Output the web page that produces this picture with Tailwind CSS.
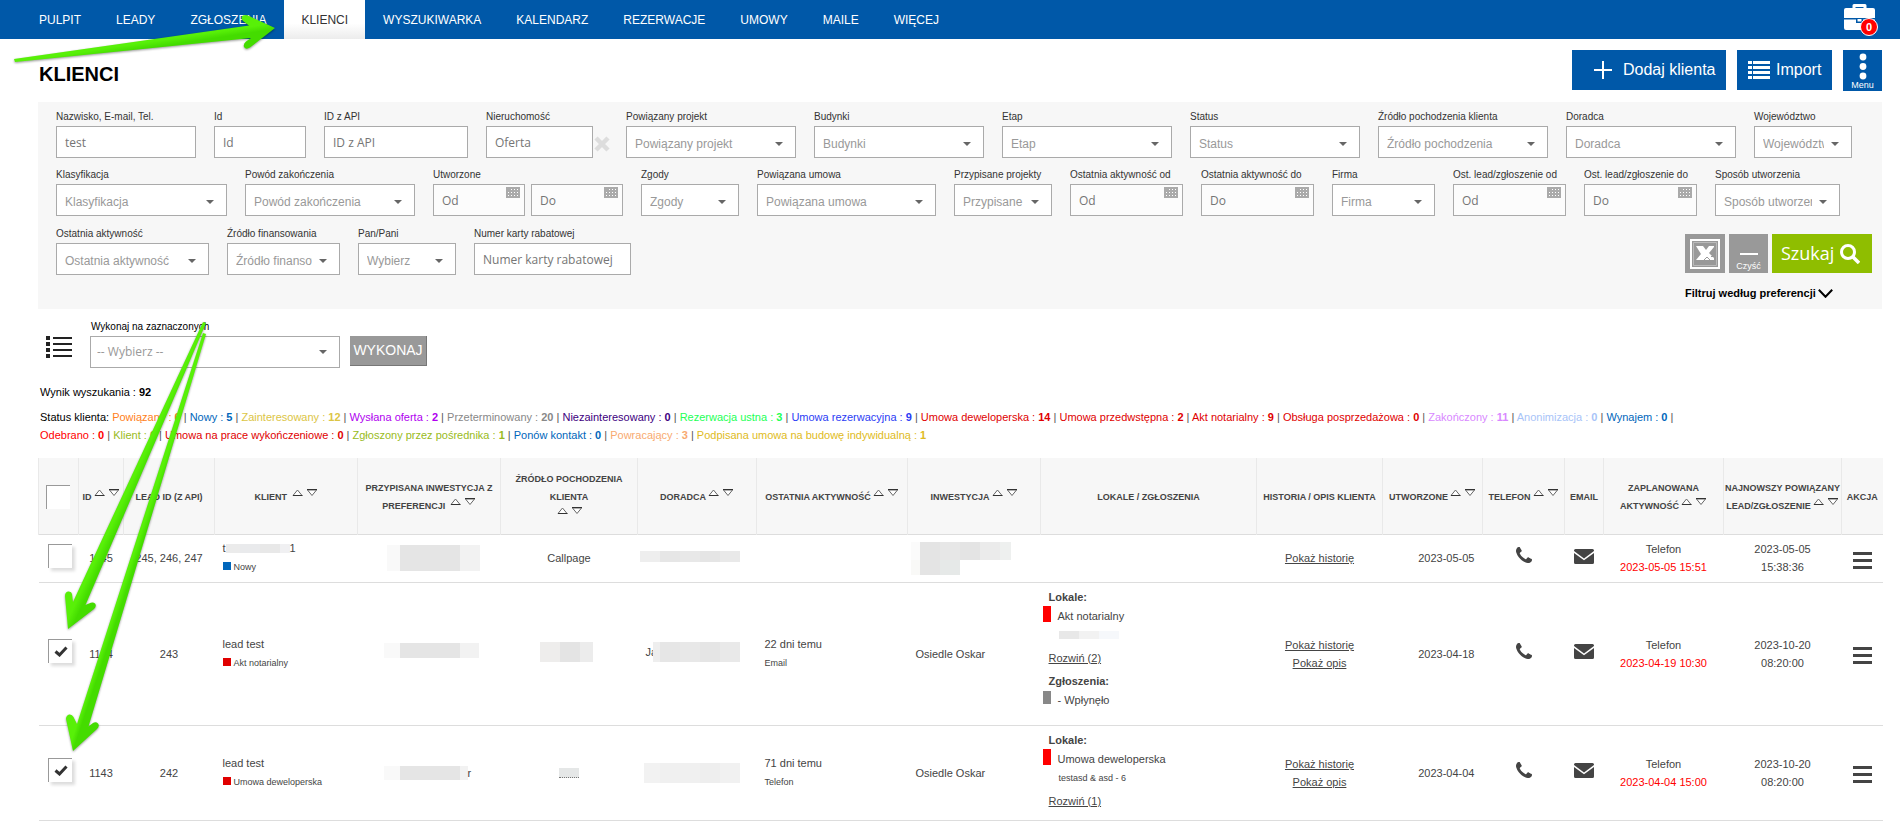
<!DOCTYPE html>
<html lang="pl">

    <head>
        <title>Klienci</title>
        <meta charset="utf-8">
        <meta name="viewport" content="width=device-width, initial-scale=1">
        <script src="https://cdn.jsdelivr.net/npm/@tailwindcss/browser@4"></script>
    </head>

    <body class="relative bg-white text-black font-['Liberation_Sans',Arial,sans-serif]">

        <!-- Shared icons -->
        <svg class="hidden">
            <symbol id="caret" viewBox="0 0 8 4">
                <path d="M0 0h8L4 4z" fill="#666" />
            </symbol>
            <symbol id="calendar" viewBox="0 0 14 11">
                <path d="M0 0h14v11H0z" fill="#aaa" />
                <path d="M5 2h1v1H5zM8 2h1v1H8zM11 2h1v1h-1zM2 5h1v1H2zM5 5h1v1H5zM8 5h1v1H8zM11 5h1v1h-1zM2 8h1v1H2zM5 8h1v1H5zM8 8h1v1H8zM11 8h1v1h-1z"
                    fill="#fff" />
            </symbol>
            <symbol id="sort" viewBox="0 0 26 11">
                <path d="M1 6.500h9L5.500 1z" fill="#fff" stroke="#666" />
                <path d="M1 6.500h9.500" stroke="#333" />
                <path d="M15.500 1h9L20 6.500z" fill="#fff" stroke="#666" />
                <path d="M15 .500h10" stroke="#333" />
            </symbol>
            <symbol id="phone" viewBox="0 0 1408 1408">
                <path d="M1408 1112q0 27-10 70.500t-21 68.500q-21 50-122 106-94 51-186 51-27 0-53-3.500t-57.500-12.500-47-14.500-55.500-20.500-49-18q-98-35-175-83-127-79-264-216t-216-264q-48-77-83-175-3-9-18-49t-20.500-55.500-14.500-47T3.500 392 0 339q0-92 51-186Q107 52 157 31q25-11 68.500-21T296 0q14 0 21 3 18 6 53 76 11 19 30 54t35 63.500 31 53.500q3 4 17.500 25t21.500 35.500 7 28.500q0 20-28.500 50t-62 55-62 53-28.500 46q0 9 5 22.500t8.500 20.500 14 24 11.500 19q76 137 174 235t235 174q2 1 19 11.500t24 14 20.500 8.500 22.500 5q18 0 46-28.500t53-62 55-62 50-28.500q14 0 28.500 7t35.500 21.500 25 17.500q25 15 53.500 31t63.500 35 54 30q70 35 76 53 3 7 3 21z"
                    fill="#444" />
            </symbol>
            <symbol id="mail" viewBox="0 0 20 15">
                <path d="M1.500 0h17Q20 0 20 1.500v.6l-10 7.400L0 2.100v-.6Q0 0 1.500 0z" fill="#444" />
                <path d="M0 4l10 7.200L20 4v9.500q0 1.500-1.500 1.500h-17Q0 15 0 13.500z" fill="#444" />
            </symbol>
            <symbol id="bars" viewBox="0 0 19 17">
                <path d="M0 0h19v3H0zM0 7h19v3H0zM0 14h19v3H0z" fill="#444" />
            </symbol>
            <symbol id="check" viewBox="0 0 14 11">
                <path d="M1.500 5.500L5.500 9 12.500 1.500" fill="none" stroke="#333" stroke-width="3" />
            </symbol>
        </svg>

        <!-- Navigation Bar -->
        <header class="flex h-[39px] items-stretch justify-between bg-[#0058a8] pl-[22px] pr-5">
            <nav
                class="flex items-stretch gap-px text-[12px] text-white [&_a]:flex [&_a]:items-center [&_a]:px-[17px]">
                <a href="#">PULPIT</a>
                <a href="#">LEADY</a>
                <a href="#">ZGŁOSZENIA</a>
                <a href="#" class="bg-linear-to-b from-white from-60% to-[#ececec] text-[#333]">KLIENCI</a>
                <a href="#">WYSZUKIWARKA</a>
                <a href="#">KALENDARZ</a>
                <a href="#">REZERWACJE</a>
                <a href="#">UMOWY</a>
                <a href="#">MAILE</a>
                <a href="#">WIĘCEJ</a>
            </nav>
            <a href="#" class="relative block w-9 pt-1" aria-label="Teczka">
                <svg class="h-7 w-[31px]" viewBox="0 0 31 28">
                    <path d="M10 5V1.500h11V5" fill="none" stroke="#fff" stroke-width="3" stroke-linejoin="round" />
                    <path d="M2 4h27q2 0 2 2v8H0V6q0-2 2-2z" fill="#fff" />
                    <path d="M0 15.500h12V19h7v-3.500h12V24q0 2-2 2H2q-2 0-2-2z" fill="#fff" />
                    <path d="M13.500 15h4v2.500h-4z" fill="#fff" />
                </svg>
                <span
                    class="absolute right-0.5 top-[18px] flex size-[18px] items-center justify-center rounded-full border border-white bg-[#f00] text-[11px] font-bold text-white">0</span>
            </a>
        </header>

        <main class="pl-[38px] pr-[18px]">

            <!-- Title and actions -->
            <div class="flex items-start justify-between pb-[11px] pt-[11px]">
                <h1 class="pt-[9px] pl-px text-[20px] leading-[30px] font-bold">KLIENCI</h1>
                <div class="flex items-start gap-[11px] text-[16px] text-white">
                    <button type="button" class="flex h-10 w-[154px] items-center gap-[11px] bg-[#0058a8] pl-[22px]">
                        <svg class="size-[18px]" viewBox="0 0 18 18">
                            <path d="M9 0v18M0 9h18" stroke="#fff" stroke-width="2" />
                        </svg>
                        Dodaj klienta
                    </button>
                    <button type="button" class="flex h-10 w-[95px] items-center gap-1.5 bg-[#0058a8] pl-[11px]">
                        <svg class="h-[18px] w-[22px]" viewBox="0 0 22 18">
                            <path d="M0 0h4v3H0zM5 0h17v3H5zM0 5h4v3H0zM5 5h17v3H5zM0 10h4v3H0zM5 10h17v3H5zM0 15h4v3H0zM5 15h17v3H5z"
                                fill="#fff" />
                        </svg>
                        Import
                    </button>
                    <button type="button"
                        class="flex h-[41px] w-[39px] flex-col items-center bg-[#0058a8] pt-[3px] text-[9px] leading-[11px]">
                        <svg class="h-[27px] w-2" viewBox="0 0 8 27">
                            <circle cx="4" cy="4" r="3.400" fill="#fff" />
                            <circle cx="4" cy="13.500" r="3.400" fill="#fff" />
                            <circle cx="4" cy="23" r="3.400" fill="#fff" />
                        </svg>
                        Menu
                    </button>
                </div>
            </div>

            <!-- Search filters -->
            <form class="flex flex-col gap-2.5 bg-[#f7f7f7] pb-2 pl-[18px] pt-2 pr-2.5
                [&_label]:mb-0.5 [&_label]:block [&_label]:whitespace-nowrap [&_label]:text-[10px] [&_label]:leading-[14px] [&_label]:text-[#333]
                [&_input]:block [&_input]:h-8 [&_input]:w-full [&_input]:border [&_input]:border-[#aaa] [&_input]:px-2 [&_input]:text-[12px] [&_input]:text-[#757575] [&_input]:placeholder:text-[#757575] [&_input]:font-['Open_Sans',sans-serif]
                [&_select]:block [&_select]:h-8 [&_select]:w-full [&_select]:appearance-none [&_select]:border [&_select]:border-[#aaa] [&_select]:bg-white [&_select]:pl-2 [&_select]:pr-[27px] [&_select]:pt-1 [&_select]:text-[12px] [&_select]:text-[#999]
                [&_.caret]:pointer-events-none [&_.caret]:absolute [&_.caret]:right-[13px] [&_.caret]:bottom-3 [&_.caret]:h-1 [&_.caret]:w-2
                [&_.cal]:pointer-events-none [&_.cal]:absolute [&_.cal]:right-[5px] [&_.cal]:bottom-[18px] [&_.cal]:h-[11px] [&_.cal]:w-3.5">

                <!-- Row 1 -->
                <div class="flex flex-wrap gap-x-[18px] gap-y-2.5">
                    <div class="w-[140px]">
                        <label for="name">Nazwisko, E-mail, Tel.</label>
                        <input type="text" id="name" value="test" class="bg-white">
                    </div>
                    <div class="w-[92px]">
                        <label for="clientId">Id</label>
                        <input type="text" id="clientId" placeholder="Id" class="bg-white">
                    </div>
                    <div class="w-36">
                        <label for="apiId">ID z API</label>
                        <input type="text" id="apiId" placeholder="ID z API" class="bg-white">
                    </div>
                    <div class="w-[122px]">
                        <label for="offer">Nieruchomość</label>
                        <div class="flex gap-px">
                            <div class="w-[107px] shrink-0">
                                <input type="text" id="offer" placeholder="Oferta" class="bg-white">
                            </div>
                            <button type="button" class="shrink-0 pt-[3px]" aria-label="Usuń">
                                <svg class="size-4" viewBox="0 0 16 16">
                                    <path d="M2 2l12 12M14 2L2 14" stroke="#ddd" stroke-width="4.500" />
                                </svg>
                            </button>
                        </div>
                    </div>
                    <div class="relative w-[170px]">
                        <label for="project">Powiązany projekt</label>
                        <select id="project"><option>Powiązany projekt</option></select>
                        <svg class="caret"><use href="#caret" /></svg>
                    </div>
                    <div class="relative w-[170px]">
                        <label for="buildings">Budynki</label>
                        <select id="buildings"><option>Budynki</option></select>
                        <svg class="caret"><use href="#caret" /></svg>
                    </div>
                    <div class="relative w-[170px]">
                        <label for="stage">Etap</label>
                        <select id="stage"><option>Etap</option></select>
                        <svg class="caret"><use href="#caret" /></svg>
                    </div>
                    <div class="relative w-[170px]">
                        <label for="status">Status</label>
                        <select id="status"><option>Status</option></select>
                        <svg class="caret"><use href="#caret" /></svg>
                    </div>
                    <div class="relative w-[170px]">
                        <label for="source">Źródło pochodzenia klienta</label>
                        <select id="source"><option>Źródło pochodzenia</option></select>
                        <svg class="caret"><use href="#caret" /></svg>
                    </div>
                    <div class="relative w-[170px]">
                        <label for="advisor">Doradca</label>
                        <select id="advisor"><option>Doradca</option></select>
                        <svg class="caret"><use href="#caret" /></svg>
                    </div>
                    <div class="relative w-[98px]">
                        <label for="region">Województwo</label>
                        <select id="region"><option>Województwo</option></select>
                        <svg class="caret"><use href="#caret" /></svg>
                    </div>
                </div>

                <!-- Row 2 -->
                <div class="flex flex-wrap gap-x-[18px] gap-y-2.5">
                    <div class="relative w-[171px]">
                        <label for="class">Klasyfikacja</label>
                        <select id="class"><option>Klasyfikacja</option></select>
                        <svg class="caret"><use href="#caret" /></svg>
                    </div>
                    <div class="relative w-[170px]">
                        <label for="reason">Powód zakończenia</label>
                        <select id="reason"><option>Powód zakończenia</option></select>
                        <svg class="caret"><use href="#caret" /></svg>
                    </div>
                    <div class="w-[190px]">
                        <label for="createdFrom">Utworzone</label>
                        <div class="grid grid-cols-2 gap-1.5">
                            <div class="relative">
                                <input type="text" id="createdFrom" placeholder="Od" class="bg-[#fcfcfc]">
                                <svg class="cal"><use href="#calendar" /></svg>
                            </div>
                            <div class="relative">
                                <input type="text" aria-label="Utworzone do" placeholder="Do" class="bg-[#fcfcfc]">
                                <svg class="cal"><use href="#calendar" /></svg>
                            </div>
                        </div>
                    </div>
                    <div class="relative w-[98px]">
                        <label for="consents">Zgody</label>
                        <select id="consents"><option>Zgody</option></select>
                        <svg class="caret"><use href="#caret" /></svg>
                    </div>
                    <div class="relative w-[179px]">
                        <label for="contract">Powiązana umowa</label>
                        <select id="contract"><option>Powiązana umowa</option></select>
                        <svg class="caret"><use href="#caret" /></svg>
                    </div>
                    <div class="relative w-[98px]">
                        <label for="assigned">Przypisane projekty</label>
                        <select id="assigned"><option>Przypisane</option></select>
                        <svg class="caret"><use href="#caret" /></svg>
                    </div>
                    <div class="relative w-[113px]">
                        <label for="activityFrom">Ostatnia aktywność od</label>
                        <input type="text" id="activityFrom" placeholder="Od" class="bg-[#fcfcfc]">
                        <svg class="cal"><use href="#calendar" /></svg>
                    </div>
                    <div class="relative w-[113px]">
                        <label for="activityTo">Ostatnia aktywność do</label>
                        <input type="text" id="activityTo" placeholder="Do" class="bg-[#fcfcfc]">
                        <svg class="cal"><use href="#calendar" /></svg>
                    </div>
                    <div class="relative w-[103px]">
                        <label for="company">Firma</label>
                        <select id="company"><option>Firma</option></select>
                        <svg class="caret"><use href="#caret" /></svg>
                    </div>
                    <div class="relative w-[113px]">
                        <label for="leadFrom">Ost. lead/zgłoszenie od</label>
                        <input type="text" id="leadFrom" placeholder="Od" class="bg-[#fcfcfc]">
                        <svg class="cal"><use href="#calendar" /></svg>
                    </div>
                    <div class="relative w-[113px]">
                        <label for="leadTo">Ost. lead/zgłoszenie do</label>
                        <input type="text" id="leadTo" placeholder="Do" class="bg-[#fcfcfc]">
                        <svg class="cal"><use href="#calendar" /></svg>
                    </div>
                    <div class="relative w-[125px]">
                        <label for="method">Sposób utworzenia</label>
                        <select id="method"><option>Sposób utworzenia</option></select>
                        <svg class="caret"><use href="#caret" /></svg>
                    </div>
                </div>

                <!-- Row 3 -->
                <div class="flex items-start justify-between pt-px">
                    <div class="flex flex-wrap gap-x-[18px] gap-y-2.5">
                        <div class="relative w-[153px]">
                            <label for="lastActivity">Ostatnia aktywność</label>
                            <select id="lastActivity"><option>Ostatnia aktywność</option></select>
                            <svg class="caret"><use href="#caret" /></svg>
                        </div>
                        <div class="relative w-[113px]">
                            <label for="funding">Źródło finansowania</label>
                            <select id="funding"><option>Źródło finansowania</option></select>
                            <svg class="caret"><use href="#caret" /></svg>
                        </div>
                        <div class="relative w-[98px]">
                            <label for="gender">Pan/Pani</label>
                            <select id="gender"><option>Wybierz</option></select>
                            <svg class="caret"><use href="#caret" /></svg>
                        </div>
                        <div class="w-[157px]">
                            <label for="card">Numer karty rabatowej</label>
                            <input type="text" id="card" placeholder="Numer karty rabatowej" class="bg-white">
                        </div>
                    </div>
                    <div class="pt-[7px]">
                        <div class="flex gap-1 text-white">
                            <button type="button" class="flex h-[39px] w-10 items-center justify-center bg-[#999]"
                                aria-label="Excel">
                                <svg class="size-[30px]" viewBox="0 0 30 30">
                                    <path d="M1 1h28v28H1z" fill="none" stroke="#fff" stroke-width="2" />
                                    <path d="M3.500 3.500h23v23h-23z" fill="none" stroke="#bbb" />
                                    <path d="M6 7h7l3 4 3-4h5v1l-5 6 5 5v2H6l5-6z" fill="#fff" />
                                    <path d="M14 21l3-3 3 3M20 14.500h5M21 17.500h4" stroke="#999" fill="none" />
                                </svg>
                            </button>
                            <button type="reset"
                                class="flex h-[39px] w-[39px] flex-col items-center bg-[#999] pt-[19px] text-[9px] leading-[11px]">
                                <span class="mb-1.5 block h-0.5 w-[18px] bg-white"></span>
                                Czyść
                            </button>
                            <button type="submit"
                                class="flex h-[39px] w-[100px] items-center gap-1.5 bg-[#8fbe00] pl-[9px] font-['Open_Sans',sans-serif] text-[18px]">
                                Szukaj
                                <svg class="size-5" viewBox="0 0 20 20">
                                    <circle cx="8" cy="8" r="6.500" fill="none" stroke="#fff" stroke-width="3" />
                                    <path d="M13 13l6 6" stroke="#fff" stroke-width="3.500" />
                                </svg>
                            </button>
                        </div>
                        <button type="button"
                            class="mt-3 flex items-center gap-0.5 text-[11px] leading-4 font-bold">
                            Filtruj według preferencji
                            <svg class="h-[9px] w-[15px]" viewBox="0 0 15 9">
                                <path d="M.800.800l6.700 7 6.700-7" fill="none" stroke="#000" stroke-width="2" />
                            </svg>
                        </button>
                    </div>
                </div>
            </form>

            <!-- Bulk actions -->
            <div class="mt-[11px] flex items-start pl-2">
                <button type="button" class="mt-4 mr-[18px] h-[22px] w-[26px]" aria-label="Lista">
                    <svg class="h-[22px] w-[26px]" viewBox="0 0 26 22">
                        <path d="M0 0h4v4H0zM7 1h19v2H7zM0 6h4v4H0zM7 7h19v2H7zM0 12h4v4H0zM7 13h19v2H7zM0 18h4v4H0zM7 19h19v2H7z"
                            fill="#222" />
                    </svg>
                </button>
                <div class="relative mr-2.5 w-[250px]">
                    <label for="bulk" class="mb-0.5 block pl-px text-[10px] leading-[14px]">Wykonaj na
                        zaznaczonych</label>
                    <select id="bulk"
                        class="block h-8 w-full appearance-none border border-[#aaa] bg-white pl-1.5 text-[12px] text-[#999] font-['Open_Sans',sans-serif]">
                        <option>-- Wybierz --</option>
                    </select>
                    <svg class="pointer-events-none absolute right-[13px] bottom-3.5 h-1 w-2">
                        <use href="#caret" />
                    </svg>
                </div>
                <button type="button"
                    class="mt-4 h-[30px] w-[77px] border-r border-b border-[#777] bg-[#999] text-[14px] text-white">WYKONAJ</button>
            </div>

            <!-- Results summary -->
            <p class="mt-[15px] pl-0.5 text-[11px] leading-[18px]">Wynik wyszukania : <b>92</b></p>
            <p class="mt-[7px] pl-0.5 pr-40 text-[11px] leading-[18px] text-[#555] [&_a]:whitespace-nowrap">
                <span class="text-black">Status klienta:</span>
                <a href="#" class="text-[#ff8020]">Powiązany : <b>0</b></a> |
                <a href="#" class="text-[#0066bb]">Nowy : <b>5</b></a> |
                <a href="#" class="text-[#dcc544]">Zainteresowany : <b>12</b></a> |
                <a href="#" class="text-[#b000f0]">Wysłana oferta : <b>2</b></a> |
                <a href="#" class="text-[#888]">Przeterminowany : <b>20</b></a> |
                <a href="#" class="text-[#400080]">Niezainteresowany : <b>0</b></a> |
                <a href="#" class="text-[#22ff55]">Rezerwacja ustna : <b>3</b></a> |
                <a href="#" class="text-[#2b3cf5]">Umowa rezerwacyjna : <b>9</b></a> |
                <a href="#" class="text-[#e00000]">Umowa deweloperska : <b>14</b></a> |
                <a href="#" class="text-[#e00000]">Umowa przedwstępna : <b>2</b></a> |
                <a href="#" class="text-[#e00000]">Akt notarialny : <b>9</b></a> |
                <a href="#" class="text-[#e00000]">Obsługa posprzedażowa : <b>0</b></a> |
                <a href="#" class="text-[#d988ff]">Zakończony : <b>11</b></a> |
                <a href="#" class="text-[#a8c4f8]">Anonimizacja : <b>0</b></a> |
                <a href="#" class="text-[#0066bb]">Wynajem : <b>0</b></a> |
                <a href="#" class="text-[#ff0000]">Odebrano : <b>0</b></a> |
                <a href="#" class="text-[#99bb22]">Klient : <b>0</b></a> |
                <a href="#" class="text-[#e00000]">Umowa na prace wykończeniowe : <b>0</b></a> |
                <a href="#" class="text-[#99bb22]">Zgłoszony przez pośrednika : <b>1</b></a> |
                <a href="#" class="text-[#0066bb]">Ponów kontakt : <b>0</b></a> |
                <a href="#" class="text-[#f8aa70]">Powracający : <b>3</b></a> |
                <a href="#" class="text-[#e0bb22]">Podpisana umowa na budowę indywidualną : <b>1</b></a>
            </p>

            <!-- Clients table -->
            <table class="mt-3.5 w-full table-fixed border-collapse text-center text-[11px] leading-[18px] text-[#444]
                [&_th]:border-l [&_th]:border-[#e9e9e9] [&_th]:px-0 [&_th]:pt-[3px] [&_th]:pb-0 [&_td]:p-0
                [&_tr]:border-b [&_tr]:border-[#ddd]
                [&_.sort]:ml-0.5 [&_.sort]:inline-block [&_.sort]:h-[11px] [&_.sort]:w-[26px] [&_.sort]:align-baseline
                [&_.sub]:text-[9px] [&_.sq]:mr-[3px] [&_.sq]:inline-block [&_.sq]:size-2">
                <colgroup>
                    <col class="w-10">
                    <col class="w-[45px]">
                    <col class="w-[91px]">
                    <col class="w-[143px]">
                    <col class="w-[143px]">
                    <col class="w-[137px]">
                    <col class="w-[119px]">
                    <col class="w-[151px]">
                    <col class="w-[133px]">
                    <col class="w-[216px]">
                    <col class="w-[126px]">
                    <col class="w-[100px]">
                    <col class="w-[82px]">
                    <col class="w-[39px]">
                    <col class="w-[120px]">
                    <col class="w-[118px]">
                    <col class="w-[41px]">
                </colgroup>
                <thead class="bg-[#f7f7f7] text-[9px]">
                    <tr class="h-[76px]">
                        <th><input type="checkbox" aria-label="Zaznacz wszystko"
                                class="ml-[7px] block size-6 appearance-none border-t border-l border-[#999] bg-white"></th>
                        <th class="whitespace-nowrap">ID<svg class="sort"><use href="#sort" /></svg></th>
                        <th>LEAD ID (Z API)</th>
                        <th>KLIENT <svg class="sort"><use href="#sort" /></svg></th>
                        <th>PRZYPISANA INWESTYCJA Z<br>PREFERENCJI <svg class="sort"><use href="#sort" /></svg></th>
                        <th>ŹRÓDŁO POCHODZENIA<br>KLIENTA<br><svg class="sort"><use href="#sort" /></svg></th>
                        <th>DORADCA<svg class="sort"><use href="#sort" /></svg></th>
                        <th>OSTATNIA AKTYWNOŚĆ<svg class="sort"><use href="#sort" /></svg></th>
                        <th>INWESTYCJA<svg class="sort"><use href="#sort" /></svg></th>
                        <th>LOKALE / ZGŁOSZENIA</th>
                        <th>HISTORIA / OPIS KLIENTA</th>
                        <th>UTWORZONE<svg class="sort"><use href="#sort" /></svg></th>
                        <th class="whitespace-nowrap">TELEFON<svg class="sort"><use href="#sort" /></svg></th>
                        <th>EMAIL</th>
                        <th>ZAPLANOWANA<br>AKTYWNOŚĆ<svg class="sort"><use href="#sort" /></svg></th>
                        <th class="whitespace-nowrap">NAJNOWSZY POWIĄZANY<br>LEAD/ZGŁOSZENIE<svg class="sort"><use href="#sort" /></svg></th>
                        <th>AKCJA</th>
                    </tr>
                </thead>
                <tbody>
                    <tr class="h-12">
                        <td>
                            <div class="relative mb-1 ml-[9px] size-6">
                                <input type="checkbox" aria-label="Zaznacz 1145"
                                    class="block size-6 appearance-none border-t border-l border-[#999] bg-white shadow-[3px_3px_3px_#ddd]">
                            </div>
                        </td>
                        <td>1145</td>
                        <td>245, 246, 247</td>
                        <td class="text-left">
                            <div class="flex items-center pl-2 leading-[19px]">
                                t<span class="flex h-[9px]"><i class="w-3.5 bg-[#ebebeb]"></i><i
                                        class="w-5 bg-[#e9eaec]"></i><i class="w-5 bg-[#e8e8e8]"></i><i
                                        class="w-2.5 bg-[#f0f0f2]"></i></span>1
                            </div>
                            <div class="sub pl-2 leading-[19px]"><i class="sq bg-[#0066bb]"></i>Nowy</div>
                        </td>
                        <td>
                            <div class="ml-[29px] flex h-[26px] w-[93px]"><i class="w-[13px] bg-[#f9f9f9]"></i><i
                                    class="w-[60px] bg-[#e5e5e5]"></i><i class="w-5 bg-[#f2f2f2]"></i></div>
                        </td>
                        <td>Callpage</td>
                        <td>
                            <div class="mb-1 ml-0.5 flex h-[11px]"><i class="w-5 bg-[#eee]"></i><i
                                    class="w-5 bg-[#e6e6e6]"></i><i class="w-5 bg-[#e8e8e8]"></i><i
                                    class="w-5 bg-[#e5e5e5]"></i><i class="w-5 bg-[#e9e9e9]"></i></div>
                        </td>
                        <td></td>
                        <td>
                            <div class="ml-[3px] flex h-[18px]"><i class="w-[9px] bg-[#fbfbfb]"></i><i
                                    class="w-5 bg-[#e4e4e4]"></i><i class="w-5 bg-[#e7e7e7]"></i><i
                                    class="w-5 bg-[#e4e4e4]"></i><i class="w-5 bg-[#ebebeb]"></i><i
                                    class="w-[11px] bg-[#eef0ef]"></i></div>
                            <div class="ml-[3px] flex h-[15px]"><i class="w-[9px] bg-[#f9f9f7]"></i><i
                                    class="w-5 bg-[#e4e4e4]"></i><i class="w-5 bg-[#e6e9e8]"></i></div>
                        </td>
                        <td></td>
                        <td><a href="#" class="underline">Pokaż historię</a></td>
                        <td class="text-right"><span class="pr-2">2023-05-05</span></td>
                        <td><a href="#" aria-label="Zadzwoń"><svg class="mx-auto mb-1.5 size-4"><use href="#phone" /></svg></a></td>
                        <td><a href="#" aria-label="Wyślij email"><svg class="mx-auto mb-1 h-[15px] w-5"><use href="#mail" /></svg></a></td>
                        <td>Telefon<br><span class="text-[#f00]">2023-05-05 15:51</span></td>
                        <td>2023-05-05<br>15:38:36</td>
                        <td><button type="button" class="block mx-auto pt-1" aria-label="Akcje"><svg class="h-[17px] w-[19px]"><use href="#bars" /></svg></button></td>
                    </tr>
                    <tr class="h-[143px]">
                        <td>
                            <div class="relative mb-1.5 ml-[9px] size-6">
                                <input type="checkbox" checked aria-label="Zaznacz 1144"
                                    class="peer block size-6 appearance-none border-t border-l border-[#999] bg-white shadow-[3px_3px_3px_#ddd]">
                                <svg class="absolute top-[7px] left-1.5 hidden h-[11px] w-3.5 peer-checked:block">
                                    <use href="#check" />
                                </svg>
                            </div>
                        </td>
                        <td>1144</td>
                        <td>243</td>
                        <td class="text-left">
                            <div class="pl-2 leading-[19px]">lead test</div>
                            <div class="sub pl-2 leading-[19px]"><i class="sq bg-[#e00000]"></i>Akt notarialny</div>
                        </td>
                        <td>
                            <div class="mb-1.5 ml-[26px] flex h-[15px]"><i class="w-4 bg-[#f9f9f9]"></i><i
                                    class="w-[60px] bg-[#e5e5e5]"></i><i class="w-[19px] bg-[#f2f2f2]"></i></div>
                        </td>
                        <td>
                            <div class="mb-1 ml-[39px] flex h-5"><i class="w-5 bg-[#eeedec]"></i><i
                                    class="w-5 bg-[#e4e4e4]"></i><i class="w-[13px] bg-[#ececec]"></i></div>
                        </td>
                        <td>
                            <div class="mb-1 ml-2 flex h-5 items-center">Ja<i
                                    class="relative -ml-1 h-5 w-[7px] bg-[#eee]"></i><i class="h-5 w-5 bg-[#e6e6e6]"></i><i
                                    class="h-5 w-5 bg-[#e8e8e8]"></i><i class="h-5 w-5 bg-[#e5e5e5]"></i><i
                                    class="h-5 w-5 bg-[#e9e9e9]"></i></div>
                        </td>
                        <td class="text-left">
                            <div class="pl-2 leading-[19px]">22 dni temu</div>
                            <div class="sub pl-2 leading-[19px]">Email</div>
                        </td>
                        <td class="text-left"><span class="pl-2">Osiedle Oskar</span></td>
                        <td class="text-left align-top">
                            <div class="pt-[5px] pl-2"><b>Lokale:</b></div>
                            <div class="flex pl-0.5 leading-5"><i class="mr-[7px] h-4 w-2 bg-[#f00]"></i>Akt notarialny</div>
                            <div class="flex h-[18px] items-center pl-[18px]"><i class="h-2 w-5 bg-[#e8e8e8]"></i><i
                                    class="h-2 w-5 bg-[#f2f2f2]"></i><i class="h-2 w-5 bg-[#f6f8fb]"></i></div>
                            <div class="mt-[5px] pl-2"><a href="#" class="underline">Rozwiń (2)</a></div>
                            <div class="mt-[5px] pl-2"><b>Zgłoszenia:</b></div>
                            <div class="flex pl-0.5 leading-5"><i class="mr-[7px] mt-px h-[13px] w-2 bg-[#888]"></i>- Wpłynęło</div>
                        </td>
                        <td><a href="#" class="underline">Pokaż historię</a><br><a href="#" class="underline">Pokaż opis</a></td>
                        <td class="text-right"><span class="pr-2">2023-04-18</span></td>
                        <td><a href="#" aria-label="Zadzwoń"><svg class="mx-auto mb-1.5 size-4"><use href="#phone" /></svg></a></td>
                        <td><a href="#" aria-label="Wyślij email"><svg class="mx-auto mb-1 h-[15px] w-5"><use href="#mail" /></svg></a></td>
                        <td>Telefon<br><span class="text-[#f00]">2023-04-19 10:30</span></td>
                        <td>2023-10-20<br>08:20:00</td>
                        <td><button type="button" class="block mx-auto pt-1" aria-label="Akcje"><svg class="h-[17px] w-[19px]"><use href="#bars" /></svg></button></td>
                    </tr>
                    <tr class="h-[95px]">
                        <td>
                            <div class="relative mb-1.5 ml-[9px] size-6">
                                <input type="checkbox" checked aria-label="Zaznacz 1143"
                                    class="peer block size-6 appearance-none border-t border-l border-[#999] bg-white shadow-[3px_3px_3px_#ddd]">
                                <svg class="absolute top-[7px] left-1.5 hidden h-[11px] w-3.5 peer-checked:block">
                                    <use href="#check" />
                                </svg>
                            </div>
                        </td>
                        <td>1143</td>
                        <td>242</td>
                        <td class="text-left">
                            <div class="pl-2 leading-[19px]">lead test</div>
                            <div class="sub pl-2 leading-[19px]"><i class="sq bg-[#e00000]"></i>Umowa deweloperska</div>
                        </td>
                        <td>
                            <div class="ml-[26px] flex items-center"><i class="h-3.5 w-4 bg-[#f9f9f9]"></i><i
                                    class="h-3.5 w-[60px] bg-[#e5e5e5]"></i><i class="h-3.5 w-2 bg-[#f2f2f2]"></i>r</div>
                        </td>
                        <td>
                            <div class="ml-[58px] flex h-2.5"><i class="w-5 border-b border-dotted border-[#777] bg-[#e5e7e7]"></i></div>
                        </td>
                        <td>
                            <div class="ml-1.5 flex h-5"><i class="w-4 bg-[#f2f2f2]"></i><i
                                    class="w-10 bg-[#f0f0f0]"></i><i class="w-5 bg-[#eee]"></i><i
                                    class="w-5 bg-[#f1f1f1]"></i></div>
                        </td>
                        <td class="text-left">
                            <div class="pl-2 leading-[19px]">71 dni temu</div>
                            <div class="sub pl-2 leading-[19px]">Telefon</div>
                        </td>
                        <td class="text-left"><span class="pl-2">Osiedle Oskar</span></td>
                        <td class="text-left align-top">
                            <div class="pt-[5px] pl-2"><b>Lokale:</b></div>
                            <div class="flex pl-0.5 leading-5"><i class="mr-[7px] h-4 w-2 bg-[#f00]"></i>Umowa deweloperska</div>
                            <div class="sub pl-[18px]">testasd &amp; asd - 6</div>
                            <div class="mt-[5px] pl-2"><a href="#" class="underline">Rozwiń (1)</a></div>
                        </td>
                        <td><a href="#" class="underline">Pokaż historię</a><br><a href="#" class="underline">Pokaż opis</a></td>
                        <td class="text-right"><span class="pr-2">2023-04-04</span></td>
                        <td><a href="#" aria-label="Zadzwoń"><svg class="mx-auto mb-1.5 size-4"><use href="#phone" /></svg></a></td>
                        <td><a href="#" aria-label="Wyślij email"><svg class="mx-auto mb-1 h-[15px] w-5"><use href="#mail" /></svg></a></td>
                        <td>Telefon<br><span class="text-[#f00]">2023-04-04 15:00</span></td>
                        <td>2023-10-20<br>08:20:00</td>
                        <td><button type="button" class="block mx-auto pt-1" aria-label="Akcje"><svg class="h-[17px] w-[19px]"><use href="#bars" /></svg></button></td>
                    </tr>
                </tbody>
            </table>
        </main>

        <!-- Guide arrows over the page -->
        <svg class="pointer-events-none absolute top-0 left-0 h-[780px] w-[300px] drop-shadow-[0_1px_1px_#0006]"
            viewBox="0 0 300 780">
            <defs>
                <linearGradient id="greenDown" gradientUnits="userSpaceOnUse" x1="200" y1="26" x2="203" y2="46">
                    <stop offset=".4" stop-color="#58f008" />
                    <stop offset=".7" stop-color="#44dc00" />
                </linearGradient>
                <linearGradient id="greenSide" gradientUnits="userSpaceOnUse" x1="100" y1="550" x2="113" y2="556">
                    <stop offset="0" stop-color="#58f008" />
                    <stop offset=".5" stop-color="#44dc00" />
                </linearGradient>
                <linearGradient id="greenSide2" gradientUnits="userSpaceOnUse" x1="135" y1="550" x2="144" y2="553">
                    <stop offset="0" stop-color="#58f008" />
                    <stop offset=".5" stop-color="#44dc00" />
                </linearGradient>
            </defs>
            <path d="M14 59L249 25.500 243 21q-3-4 0-5.500 3-1 6 .5L275 28 250 47.500q-4 2.500-6-.5-1-3 2-5.500l5-3.500L15 62z"
                fill="url(#greenDown)" />
            <path d="M203 322L73 602l-1-8q-.5-3-4-2.500-3 .5-3 4.500l3 33 26-20q3-3 1-5.500-2-2-6 0l-3.500 1.500L206 323z"
                fill="url(#greenSide)" />
            <path d="M203 333L77 724l-3.500-7q-1.500-3-4.500-2.500-3 1-3 4.500l7 32 24-22q3-3 1-5.500-2-2-5-.5l-4.500 3.500L206 334z"
                fill="url(#greenSide2)" />
        </svg>
    </body>

</html>
